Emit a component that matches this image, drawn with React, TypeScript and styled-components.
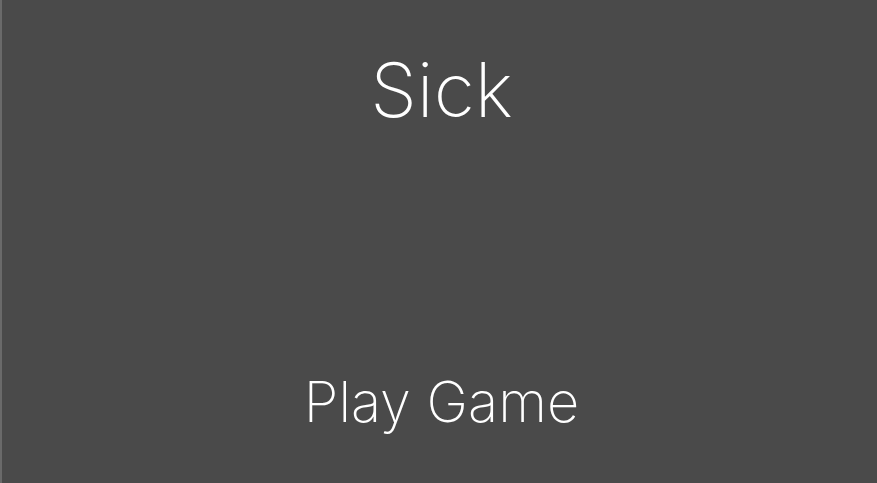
import styled, { createGlobalStyle } from 'styled-components'

const GlobalStyle = createGlobalStyle`
  html, body {
    margin: 0;
    padding: 0;
    background: #4a4a4a;
  }
  #root {
    height: 100vh;
  }
`

const Screen = styled.main`
  box-sizing: border-box;
  height: 100vh;
  background: #4a4a4a;
  border-left: 2px solid #6a6a6a;
  display: flex;
  flex-direction: column;
  align-items: center;
  justify-content: space-between;
  padding: 52px 0 53px 4px;
  font-family: Inter, 'Noto Sans', sans-serif;
  color: #ffffff;
`

const Title = styled.h1`
  margin: 0;
  font-size: 75px;
  font-weight: 200;
  line-height: 1;
`

const PlayButton = styled.button`
  border: none;
  background: none;
  padding: 0;
  color: inherit;
  font-family: inherit;
  font-size: 56px;
  font-weight: 200;
  line-height: 1;
  cursor: pointer;
`

export default function App() {
  return (
    <>
      <GlobalStyle />
      <Screen>
        <Title>Sick</Title>
        <PlayButton>Play Game</PlayButton>
      </Screen>
    </>
  )
}
